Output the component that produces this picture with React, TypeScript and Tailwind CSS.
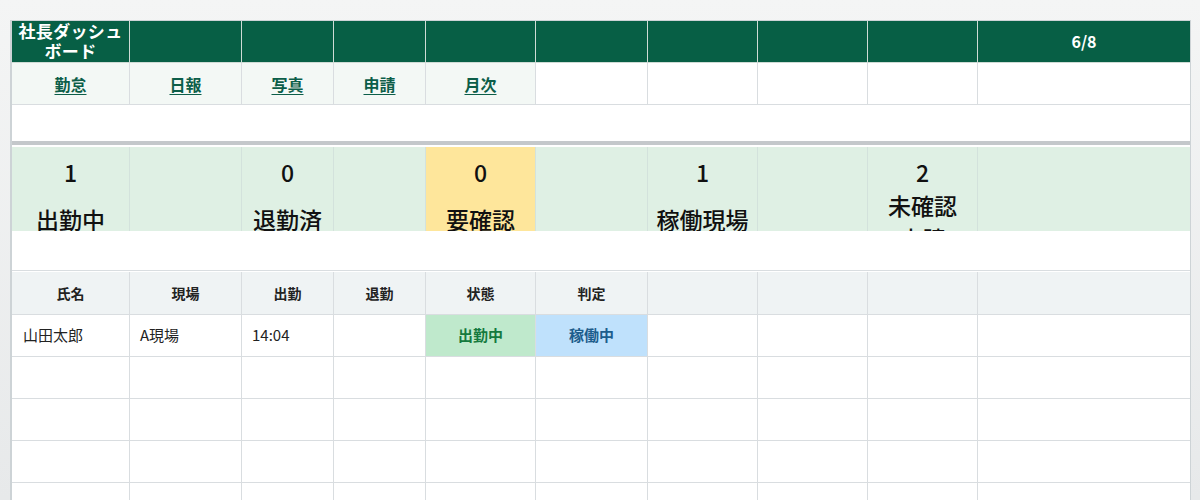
import React from "react";

const COLS = [
  "w-[118px]",
  "w-[112px]",
  "w-[92px]",
  "w-[92px]",
  "w-[110px]",
  "w-[112px]",
  "w-[110px]",
  "w-[110px]",
  "w-[110px]",
  "flex-1",
];

const LINKS = ["勤怠", "日報", "写真", "申請", "月次"];

const STATS: Record<
  number,
  { value: string; label: React.ReactNode; tone?: "warn"; shift?: string }
> = {
  0: { value: "1", label: "出勤中" },
  2: { value: "0", label: "退勤済" },
  4: { value: "0", label: "要確認", tone: "warn" },
  6: { value: "1", label: "稼働現場" },
  8: {
    value: "2",
    label: (
      <>
        未確認
        <br />
        申請
      </>
    ),
    shift: "pt-[5px]",
  },
};

const HEADERS = ["氏名", "現場", "出勤", "退勤", "状態", "判定"];

function Cell({
  i,
  className = "",
  children,
}: {
  i: number;
  className?: string;
  children?: React.ReactNode;
}) {
  return (
    <div
      className={`${COLS[i]} shrink-0 h-full ${
        i < COLS.length - 1 ? "border-r" : ""
      } ${className}`}
    >
      {children}
    </div>
  );
}

function StatCell({ i }: { i: number }) {
  const stat = STATS[i];
  const bg = stat?.tone === "warn" ? "bg-[#fee69b]" : "bg-[#dff0e4]";
  return (
    <Cell i={i} className={`${bg} border-[#d3e2dc] overflow-hidden`}>
      {stat ? (
        <div className="flex flex-col items-center text-[23px] font-medium text-[#111]">
          <div className="mt-[10px] h-[30px] leading-[30px]">{stat.value}</div>
          <div
            className={`h-[64px] flex items-center justify-center px-1 text-center leading-[33px] whitespace-nowrap ${
              stat.shift ?? ""
            }`}
          >
            <div>{stat.label}</div>
          </div>
        </div>
      ) : null}
    </Cell>
  );
}

export default function App() {
  return (
    <div
      className="w-[1200px] h-[500px] overflow-hidden bg-linear-to-b from-[#f4f5f5] to-[#e7e9ea] pt-[20px] pl-[10px]"
      style={{ fontFamily: '"Noto Sans CJK JP", "Noto Sans", sans-serif' }}
    >
      <div className="w-[1181px] h-[600px] bg-white border border-l-2 border-[#cdd3d6]">
        {/* title bar */}
        <div className="flex h-[42px] bg-[#075f45] border-b border-[#cfdbd5]">
          {COLS.map((_, i) => (
            <Cell
              key={i}
              i={i}
              className="border-[#cfdbd5] flex items-center justify-center text-white font-bold"
            >
              {i === 0 ? (
                <div className="text-[17px] leading-[20px] text-center tracking-[0.02em] -mt-px">
                  社長ダッシュ
                  <br />
                  ボード
                </div>
              ) : i === 9 ? (
                <span className="text-[16px] -mt-[2px]">6/8</span>
              ) : null}
            </Cell>
          ))}
        </div>

        {/* nav links */}
        <div className="flex h-[42px] border-b border-[#d9dde0]">
          {COLS.map((_, i) => (
            <Cell
              key={i}
              i={i}
              className={`border-[#d9dde0] flex items-center justify-center ${
                i < LINKS.length ? "bg-[#f3f8f5]" : "bg-white"
              }`}
            >
              {LINKS[i] ? (
                <a
                  href="#"
                  className="text-[16px] font-semibold text-[#0c5e49] underline underline-offset-[3px]"
                >
                  {LINKS[i]}
                </a>
              ) : null}
            </Cell>
          ))}
        </div>

        <div className="h-[36px] bg-white" />
        <div className="h-[4px] bg-[#c4c8cb]" />
        <div className="h-[2px] bg-white" />

        {/* stats */}
        <div className="flex h-[84px]">
          {COLS.map((_, i) => (
            <StatCell key={i} i={i} />
          ))}
        </div>

        <div className="h-[40px] bg-white border-b border-[#d9dde0]" />
        <div className="h-px bg-white" />

        {/* table head */}
        <div className="flex h-[43px] bg-[#eff3f4] border-b border-[#d9dde0]">
          {COLS.map((_, i) => (
            <Cell
              key={i}
              i={i}
              className="border-[#d9dde0] flex items-center justify-center text-[14px] font-bold text-[#222]"
            >
              {HEADERS[i]}
            </Cell>
          ))}
        </div>

        {/* data row */}
        <div className="flex h-[42px] border-b border-[#d9dde0] text-[15px] text-[#222]">
          <Cell i={0} className="border-[#d9dde0] flex items-center pl-[11px]">
            山田太郎
          </Cell>
          <Cell i={1} className="border-[#d9dde0] flex items-center pl-[10px]">
            A現場
          </Cell>
          <Cell i={2} className="border-[#d9dde0] flex items-center pl-[10px]">
            14:04
          </Cell>
          <Cell i={3} className="border-[#d9dde0]" />
          <Cell
            i={4}
            className="border-[#d9dde0] bg-[#bfe9cc] flex items-center justify-center font-bold text-[15px] text-[#157a3e]"
          >
            出勤中
          </Cell>
          <Cell
            i={5}
            className="border-[#d9dde0] bg-[#bfe1fc] flex items-center justify-center font-bold text-[15px] text-[#1d5d8c]"
          >
            稼働中
          </Cell>
          {[6, 7, 8, 9].map((i) => (
            <Cell key={i} i={i} className="border-[#d9dde0]" />
          ))}
        </div>

        {[0, 1, 2, 3].map((r) => (
          <div key={r} className="flex h-[42px] border-b border-[#d9dde0]">
            {COLS.map((_, i) => (
              <Cell key={i} i={i} className="border-[#d9dde0]" />
            ))}
          </div>
        ))}
      </div>
    </div>
  );
}
